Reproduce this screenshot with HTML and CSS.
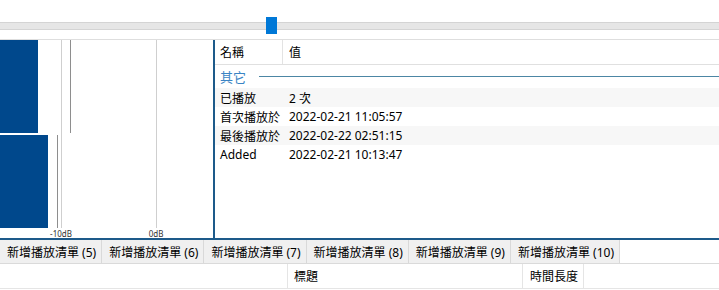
FILE: index.html
```html
<!DOCTYPE html>
<html lang="zh-Hant">
<head>
    <meta charset="UTF-8">
    <meta name="viewport" content="width=device-width, initial-scale=1.0">
    <title>播放清單</title>
    <link rel="stylesheet" href="styles.css">
</head>
<body>
    <div class="seek">
        <div class="track">
            <div class="thumb"></div>
        </div>
    </div>

    <div class="main">
        <div class="meter">
            <div class="grid" style="left: 61px"></div>
            <div class="grid" style="left: 156px"></div>
            <div class="band">
                <div class="bar" style="width: 38px"></div>
                <div class="peak" style="left: 70px"></div>
            </div>
            <div class="band">
                <div class="bar" style="width: 48px"></div>
                <div class="peak" style="left: 57px"></div>
            </div>
            <div class="scale">
                <span class="tick" style="left: 61px">-10dB</span>
                <span class="tick" style="left: 156px">0dB</span>
            </div>
        </div>

        <div class="props">
            <div class="props-head">
                <div class="col-name">名稱</div>
                <div class="col-value">值</div>
            </div>
            <div class="group">
                <span class="group-title">其它</span>
                <span class="group-line"></span>
            </div>
            <div class="prop-row alt">
                <div class="col-name">已播放</div>
                <div class="col-value">2 次</div>
            </div>
            <div class="prop-row">
                <div class="col-name">首次播放於</div>
                <div class="col-value">2022-02-21 11:05:57</div>
            </div>
            <div class="prop-row alt">
                <div class="col-name">最後播放於</div>
                <div class="col-value">2022-02-22 02:51:15</div>
            </div>
            <div class="prop-row">
                <div class="col-name">Added</div>
                <div class="col-value">2022-02-21 10:13:47</div>
            </div>
        </div>
    </div>

    <div class="tabs">
        <div class="tab">新增播放清單 (5)</div>
        <div class="tab">新增播放清單 (6)</div>
        <div class="tab">新增播放清單 (7)</div>
        <div class="tab">新增播放清單 (8)</div>
        <div class="tab">新增播放清單 (9)</div>
        <div class="tab">新增播放清單 (10)</div>
    </div>

    <div class="list-head">
        <div class="lh-col lh-first"></div>
        <div class="lh-col lh-title">標題</div>
        <div class="lh-col lh-length">時間長度</div>
        <div class="lh-col lh-rest"></div>
    </div>
</body>
</html>
```

FILE: styles.css
```css
* {
    margin: 0;
    padding: 0;
    box-sizing: border-box;
}

body {
    width: 719px;
    height: 290px;
    overflow: hidden;
    background-color: #fff;
    color: #000;
    font-family: 'Noto Sans', 'Noto Sans CJK TC', sans-serif;
    font-size: 12px;
    display: flex;
    flex-direction: column;
}

/* seek bar */
.seek {
    height: 39px;
    padding-top: 22px;
}

.track {
    position: relative;
    height: 8px;
    background-color: #e6e6e6;
    border-top: 1px solid #d4d4d4;
    border-bottom: 1px solid #d4d4d4;
}

.thumb {
    position: absolute;
    left: 266px;
    top: -6px;
    width: 11px;
    height: 17px;
    background-color: #0078d7;
}

/* top panels */
.main {
    display: flex;
    height: 201px;
    border-top: 1px solid #dedede;
    border-bottom: 2px solid #1d5a8a;
}

.meter {
    position: relative;
    width: 215px;
    border-right: 2px solid #1d5a8a;
    display: flex;
    flex-direction: column;
    gap: 2px;
}

.grid {
    position: absolute;
    top: 0;
    width: 1px;
    height: 188px;
    background-color: #cfcfcf;
}

.band {
    position: relative;
    height: 93px;
}

.bar {
    height: 100%;
    background-color: #00488c;
}

.peak {
    position: absolute;
    top: 0;
    width: 1px;
    height: 100%;
    background-color: #8e8e8e;
}

.scale {
    position: relative;
    height: 8px;
}

.tick {
    position: absolute;
    top: -1px;
    transform: translateX(-50%);
    font-size: 8px;
    line-height: 10px;
    color: #333;
}

.props {
    flex: 1;
    display: flex;
    flex-direction: column;
}

.props-head {
    display: flex;
    height: 25px;
    border-bottom: 1px solid #e0e0e0;
    align-items: stretch;
}

.props-head .col-name {
    border-right: 1px solid #e3e3e3;
}

.col-name {
    width: 68px;
    padding-left: 5px;
    display: flex;
    align-items: center;
    white-space: nowrap;
}

.col-value {
    padding-left: 6px;
    display: flex;
    align-items: center;
    white-space: nowrap;
}

.group {
    display: flex;
    align-items: center;
    height: 23px;
    padding-left: 5px;
    gap: 13px;
}

.group-title {
    color: #3a84c4;
    font-size: 13px;
}

.group-line {
    flex: 1;
    height: 1px;
    background-color: #4c86a4;
}

.prop-row {
    display: flex;
    height: 19px;
}

.prop-row.alt {
    background-color: #f7f7f7;
}

/* playlist tabs */
.tabs {
    display: flex;
    height: 24px;
    border-bottom: 1px solid #dadada;
}

.tab {
    display: flex;
    align-items: center;
    padding: 0 5px 0 7px;
    background-color: #f0f0f0;
    border-right: 1px solid #d9d9d9;
    white-space: nowrap;
}

/* list header */
.list-head {
    display: flex;
    height: 25px;
    border-bottom: 1px solid #e5e5e5;
}

.lh-col {
    display: flex;
    align-items: center;
    padding-left: 6px;
    border-right: 1px solid #e5e5e5;
    white-space: nowrap;
}

.lh-first {
    width: 288px;
}

.lh-title {
    width: 235px;
}

.lh-length {
    width: 61px;
    padding-left: 7px;
}

.lh-rest {
    flex: 1;
    border-right: none;
}
```
